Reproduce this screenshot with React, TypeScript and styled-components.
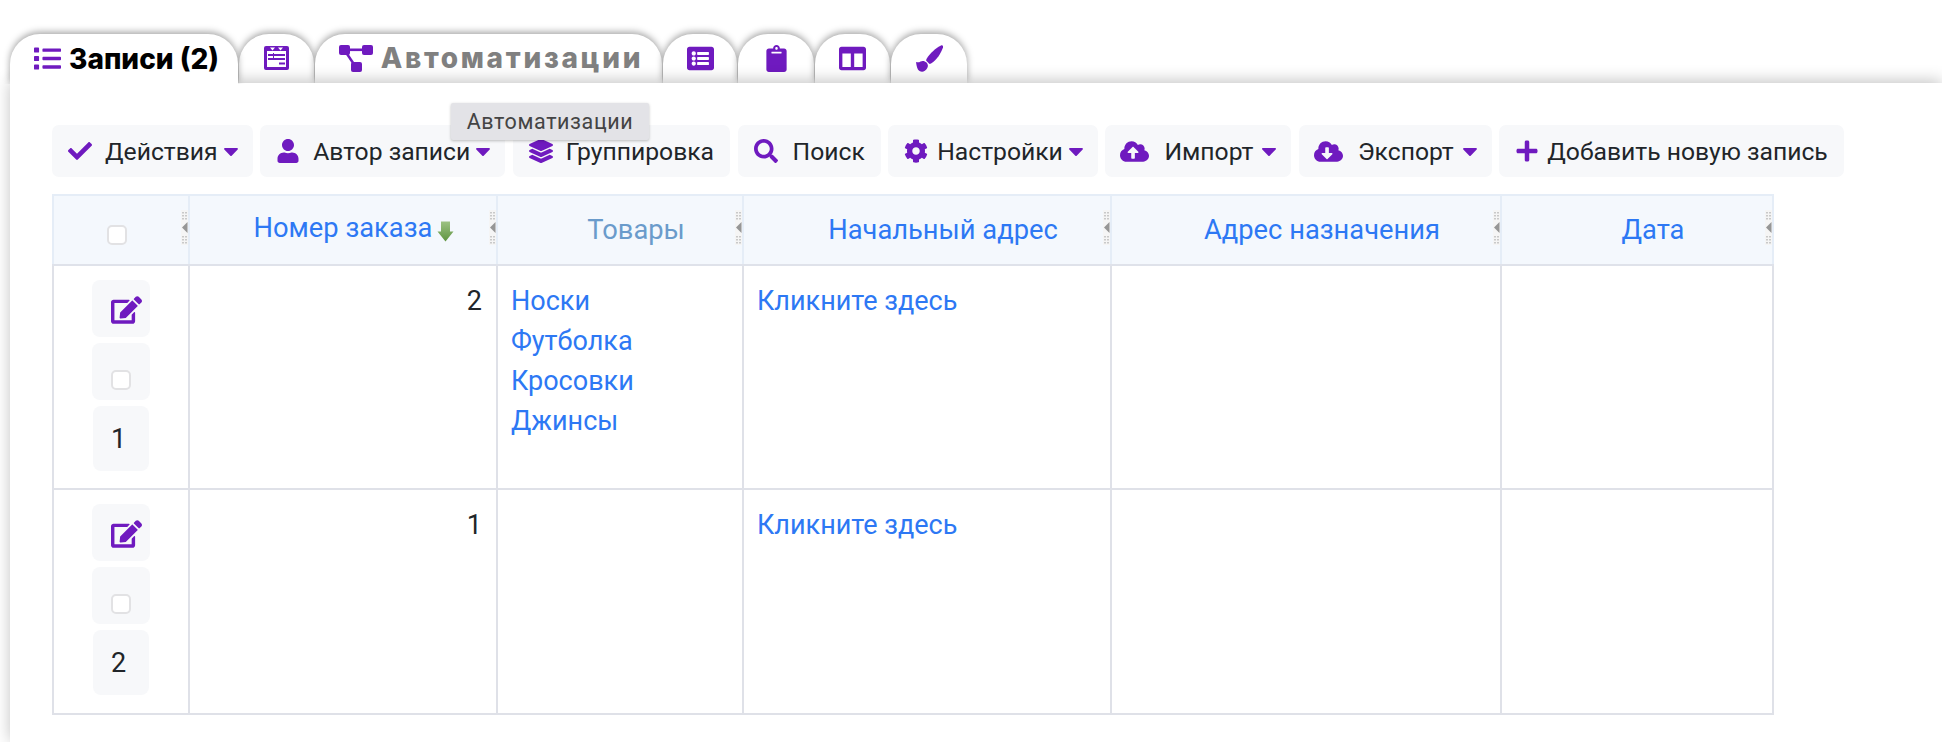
import React from 'react'
import styled, { createGlobalStyle } from 'styled-components'
import {
  FaList,
  FaListAlt,
  FaClipboard,
  FaColumns,
  FaCheck,
  FaCaretDown,
  FaUser,
  FaLayerGroup,
  FaSearch,
  FaCog,
  FaCloudUploadAlt,
  FaCloudDownloadAlt,
  FaPlus,
  FaEdit,
} from 'react-icons/fa'

const purple = '#6f1abf'
const linkBlue = '#2d78f4'

const FormIcon = () => (
  <svg width="25" height="24" viewBox="0 0 25 24">
    <rect width="25" height="24" rx="2" fill={purple} />
    <rect x="3" y="5" width="19" height="16" fill="#fff" />
    <path d="M6 1.500h5l-2.500 3zM14 1.500h5l-2.500 3z" fill="#fff" />
    <path d="M4 8h17v2H4zM4 12h17v2H4zM15 16.500h6v2h-6z" fill={purple} />
    <path d="M9 7h1v7H9z" fill={purple} />
  </svg>
)

const DiagramIcon = () => (
  <svg width="34" height="27" viewBox="0 0 34 27" fill={purple}>
    <rect x="0" y="0" width="11" height="10" rx="2" />
    <rect x="23" y="0" width="11" height="10" rx="2" />
    <rect x="12" y="17" width="11" height="10" rx="2" />
    <path d="M10 3.500h14v2.600H10z" />
    <path d="M6.500 9l2.200-1.300 7.500 11-2.200 1.300z" />
  </svg>
)

const BrushIcon = () => (
  <svg width="27" height="27" viewBox="0 0 27 27" fill={purple}>
    <path d="M25 .5C26.500 0 27.500 1 27 2.500 25 8 21 15 15 18.500c-1 .5-1.500.5-2 0L10.500 16c-.5-.5-.5-1 0-2C14 8 20 3 25 .5z" />
    <path d="M0 17c1.500.5 3 .5 4.500-.5 2-1 4.500-.5 6 1s2 4 .5 6c-1.500 3-5 4-7.500 2.500C1 24.500.5 20 0 17z" />
  </svg>
)

const Resizer = () => (
  <Grip>
    <svg width="7" height="35" viewBox="0 0 7 35">
      <path d="M1 2h2v1.500H1zM4 2h2v1.500H4zM1 5h2v1.500H1zM4 5h2v1.500H4zM1 8h2v1.500H1zM4 8h2v1.500H4z" fill="#c9c9c9" />
      <path d="M6.500 12v11L1 17.500z" fill="#969696" />
      <path d="M1 26h2v1.500H1zM4 26h2v1.500H4zM1 29h2v1.500H1zM4 29h2v1.500H4zM1 32h2v1.500H1zM4 32h2v1.500H4z" fill="#c9c9c9" />
    </svg>
  </Grip>
)

const SortArrow = () => (
  <svg width="17" height="21" viewBox="0 0 17 21">
    <defs>
      <linearGradient id="sortGreen" x1="0" y1="0" x2="0" y2="1">
        <stop offset="0" stopColor="#9cc283" />
        <stop offset="1" stopColor="#5f9440" />
      </linearGradient>
    </defs>
    <path d="M4 0.500h9v10H16.500L8.500 20.500L0.500 10.500H4z" fill="url(#sortGreen)" />
  </svg>
)

type Tool = { label: string; icon: React.ReactNode; caret?: boolean; gap?: number; big?: boolean }

const tools: Tool[] = [
  { label: 'Действия', icon: <FaCheck />, caret: true },
  { label: 'Автор записи', icon: <FaUser />, caret: true },
  { label: 'Группировка', icon: <FaLayerGroup /> },
  { label: 'Поиск', icon: <FaSearch />, gap: 15 },
  { label: 'Настройки', icon: <FaCog />, caret: true, gap: 9 },
  { label: 'Импорт', icon: <FaCloudUploadAlt />, caret: true, gap: 15, big: true },
  { label: 'Экспорт', icon: <FaCloudDownloadAlt />, caret: true, gap: 15, big: true },
  { label: 'Добавить новую запись', icon: <FaPlus />, gap: 8 },
]

const columns = [
  { label: 'Номер заказа', width: 308, sorted: true },
  { label: 'Товары', width: 246, muted: true },
  { label: 'Начальный адрес', width: 368 },
  { label: 'Адрес назначения', width: 390 },
  { label: 'Дата', width: 272 },
]

const rows = [
  { id: 1, order: 2, goods: ['Носки', 'Футболка', 'Кросовки', 'Джинсы'] },
  { id: 2, order: 1, goods: [] as string[] },
]

const App = () => (
  <Page>
    <GlobalStyle />
    <TabBar>
      <Tab $active $width={228} $text>
        <TabIcon><FaList /></TabIcon>
        <TabText $active>Записи (2)</TabText>
      </Tab>
      <Tab $width={75}><FormIcon /></Tab>
      <Tab $width={347} $text>
        <DiagramIcon />
        <TabText>Автоматизации</TabText>
      </Tab>
      <Tab $width={74}><TabIcon><FaListAlt /></TabIcon></Tab>
      <Tab $width={76}><TabIcon><FaClipboard /></TabIcon></Tab>
      <Tab $width={75}><TabIcon><FaColumns /></TabIcon></Tab>
      <Tab $width={76}><BrushIcon /></Tab>
    </TabBar>
    <Panel>
      <Tooltip>Автоматизации</Tooltip>
      <Toolbar>
        {tools.map(t => (
          <ToolButton key={t.label}>
            <ToolIcon $gap={t.gap} $big={t.big}>{t.icon}</ToolIcon>
            {t.label}
            {t.caret && <Caret $wide={t.big}><FaCaretDown /></Caret>}
          </ToolButton>
        ))}
      </Toolbar>
      <Table>
        <colgroup>
          <col style={{ width: 136 }} />
          {columns.map(c => <col key={c.label} style={{ width: c.width }} />)}
        </colgroup>
        <thead>
          <tr>
            <SelectHead>
              <HeadCheck><CheckBox /></HeadCheck>
              <Resizer />
            </SelectHead>
            {columns.map(c => (
              <HeadCell key={c.label} $muted={c.muted}>
                {c.label}
                {c.sorted && <SortSlot><SortArrow /></SortSlot>}
                <Resizer />
              </HeadCell>
            ))}
          </tr>
        </thead>
        <tbody>
          {rows.map(r => (
            <Row key={r.id} $height={r.id === 1 ? 224 : 225}>
              <ActionCell>
                <ActionStack>
                  <EditButton><FaEdit /></EditButton>
                  <SelectButton><CheckBox /></SelectButton>
                  <NumberBadge>{r.id}</NumberBadge>
                </ActionStack>
              </ActionCell>
              <NumberCell>{r.order}</NumberCell>
              <Cell>
                {r.goods.map(g => <CellLink key={g}>{g}</CellLink>)}
              </Cell>
              <Cell><CellLink>Кликните здесь</CellLink></Cell>
              <Cell />
              <Cell />
            </Row>
          ))}
        </tbody>
      </Table>
    </Panel>
  </Page>
)

export default App

// Styles
const GlobalStyle = createGlobalStyle`
  html, body {
    margin: 0;
    padding: 0;
    background: #fff;
  }
`

const Page = styled.div`
  height: 742px;
  overflow: hidden;
  padding: 34px 0 0 10px;
  box-sizing: border-box;
  font-family: Roboto, 'Liberation Sans', sans-serif;
  color: #212529;
`

const TabBar = styled.div`
  display: flex;
  height: 49px;
  gap: 1px;
`

const Tab = styled.div<{ $active?: boolean; $width: number; $text?: boolean }>`
  position: relative;
  z-index: ${p => (p.$active ? 2 : 0)};
  width: ${p => p.$width}px;
  height: ${p => (p.$active ? 50 : 49)}px;
  box-sizing: border-box;
  display: flex;
  align-items: center;
  justify-content: center;
  gap: 8px;
  padding: 0 0 1px ${p => (p.$text ? 5 : 0)}px;
  background: #fff;
  border-radius: 30px 30px 0 0;
  box-shadow: 0 -2px 7px rgba(0, 0, 0, 0.36);
  clip-path: inset(-10px -10px 0 -10px);
`

const TabIcon = styled.span`
  display: flex;
  color: ${purple};
  svg {
    height: 27px;
    width: auto;
  }
`

const TabText = styled.span<{ $active?: boolean }>`
  font-family: Inter, sans-serif;
  font-size: 28px;
  font-weight: 800;
  letter-spacing: ${p => (p.$active ? 0 : 2.7)}px;
  color: ${p => (p.$active ? '#000' : '#808080')};
`

const Panel = styled.div`
  position: relative;
  z-index: 1;
  height: 660px;
  box-sizing: border-box;
  padding: 42px 0 0 42px;
  background: #fff;
  box-shadow: 0 -2px 15px rgba(0, 0, 0, 0.24);
`

const Tooltip = styled.div`
  position: absolute;
  z-index: 5;
  left: 441px;
  top: 20px;
  width: 198px;
  height: 37px;
  box-sizing: border-box;
  display: flex;
  align-items: center;
  justify-content: center;
  background: #e3e3e7;
  border-radius: 2px;
  box-shadow: 0 1px 3px rgba(0, 0, 0, 0.25);
  color: #444;
  font-size: 21.500px;
  letter-spacing: 0.6px;
`

const Toolbar = styled.div`
  display: flex;
  gap: 7.500px;
`

const ToolButton = styled.div`
  height: 52px;
  box-sizing: border-box;
  display: flex;
  align-items: center;
  padding: 0 16px;
  background: #f7f8fa;
  border-radius: 7px;
  font-size: 24.700px;
  color: #212529;
  white-space: nowrap;
`

const ToolIcon = styled.span<{ $gap?: number; $big?: boolean }>`
  display: flex;
  margin-left: ${p => (p.$big ? -1 : 0)}px;
  margin-right: ${p => p.$gap ?? 13}px;
  color: ${purple};
  svg {
    height: ${p => (p.$big ? 29 : 24)}px;
    width: auto;
  }
`

const Caret = styled.span<{ $wide?: boolean }>`
  display: flex;
  margin: 0 -6px 0 ${p => (p.$wide ? 4 : 1)}px;
  color: ${purple};
  svg {
    height: 24px;
    width: auto;
  }
`

const Table = styled.table`
  table-layout: fixed;
  width: 1721px;
  margin-top: 17px;
  border-collapse: collapse;
  font-size: 27px;
`

const HeadCell = styled.th<{ $muted?: boolean }>`
  position: relative;
  height: 70px;
  padding: 0 0 0 32px;
  box-sizing: border-box;
  background: #f4f8fd;
  border: 2px solid #e5edf7;
  border-bottom-color: #dfe2ea;
  font-size: 27.300px;
  font-weight: 400;
  text-align: center;
  color: ${p => (p.$muted ? '#6a9bcb' : linkBlue)};
`

const SelectHead = styled(HeadCell)`
  padding: 0 8px 0 0;
`

const Grip = styled.span`
  position: absolute;
  top: 14px;
  right: 0;
  display: flex;
  background: #f5f5f5;
`

const HeadCheck = styled.span`
  display: inline-flex;
  vertical-align: -6px;
`

const SortSlot = styled.span`
  display: inline-block;
  margin: 0 10px 0 5px;
  vertical-align: -5px;
`

const CheckBox = styled.span`
  display: block;
  width: 20px;
  height: 20px;
  box-sizing: border-box;
  background: #fff;
  border: 2px solid #e2e2e4;
  border-radius: 5px;
`

const Row = styled.tr<{ $height: number }>`
  height: ${p => p.$height}px;
`

const Cell = styled.td`
  padding: 15px 14px 16px 13px;
  line-height: 40px;
  vertical-align: top;
  border: 2px solid #dfe1e8;
`

const NumberCell = styled(Cell)`
  text-align: right;
`

const ActionCell = styled.td`
  padding: 14px 0 0;
  vertical-align: top;
  border: 2px solid #dfe1e8;
`

const ActionStack = styled.div`
  display: flex;
  flex-direction: column;
  align-items: center;
  gap: 6px;
`

const EditButton = styled.div`
  width: 58px;
  height: 57px;
  box-sizing: border-box;
  display: flex;
  align-items: center;
  justify-content: center;
  padding: 2px 0 0 11px;
  background: #f7f8fa;
  border-radius: 8px;
  color: ${purple};
  svg {
    width: 31px;
    height: 28px;
  }
`

const SelectButton = styled.div`
  width: 58px;
  height: 57px;
  box-sizing: border-box;
  display: flex;
  justify-content: center;
  padding-top: 27px;
  background: #f7f8fa;
  border-radius: 8px;
`

const NumberBadge = styled.div`
  width: 56px;
  height: 65px;
  box-sizing: border-box;
  display: flex;
  align-items: center;
  justify-content: center;
  padding-right: 5px;
  background: #f7f8fa;
  border-radius: 8px;
`

const CellLink = styled.div`
  color: ${linkBlue};
`
